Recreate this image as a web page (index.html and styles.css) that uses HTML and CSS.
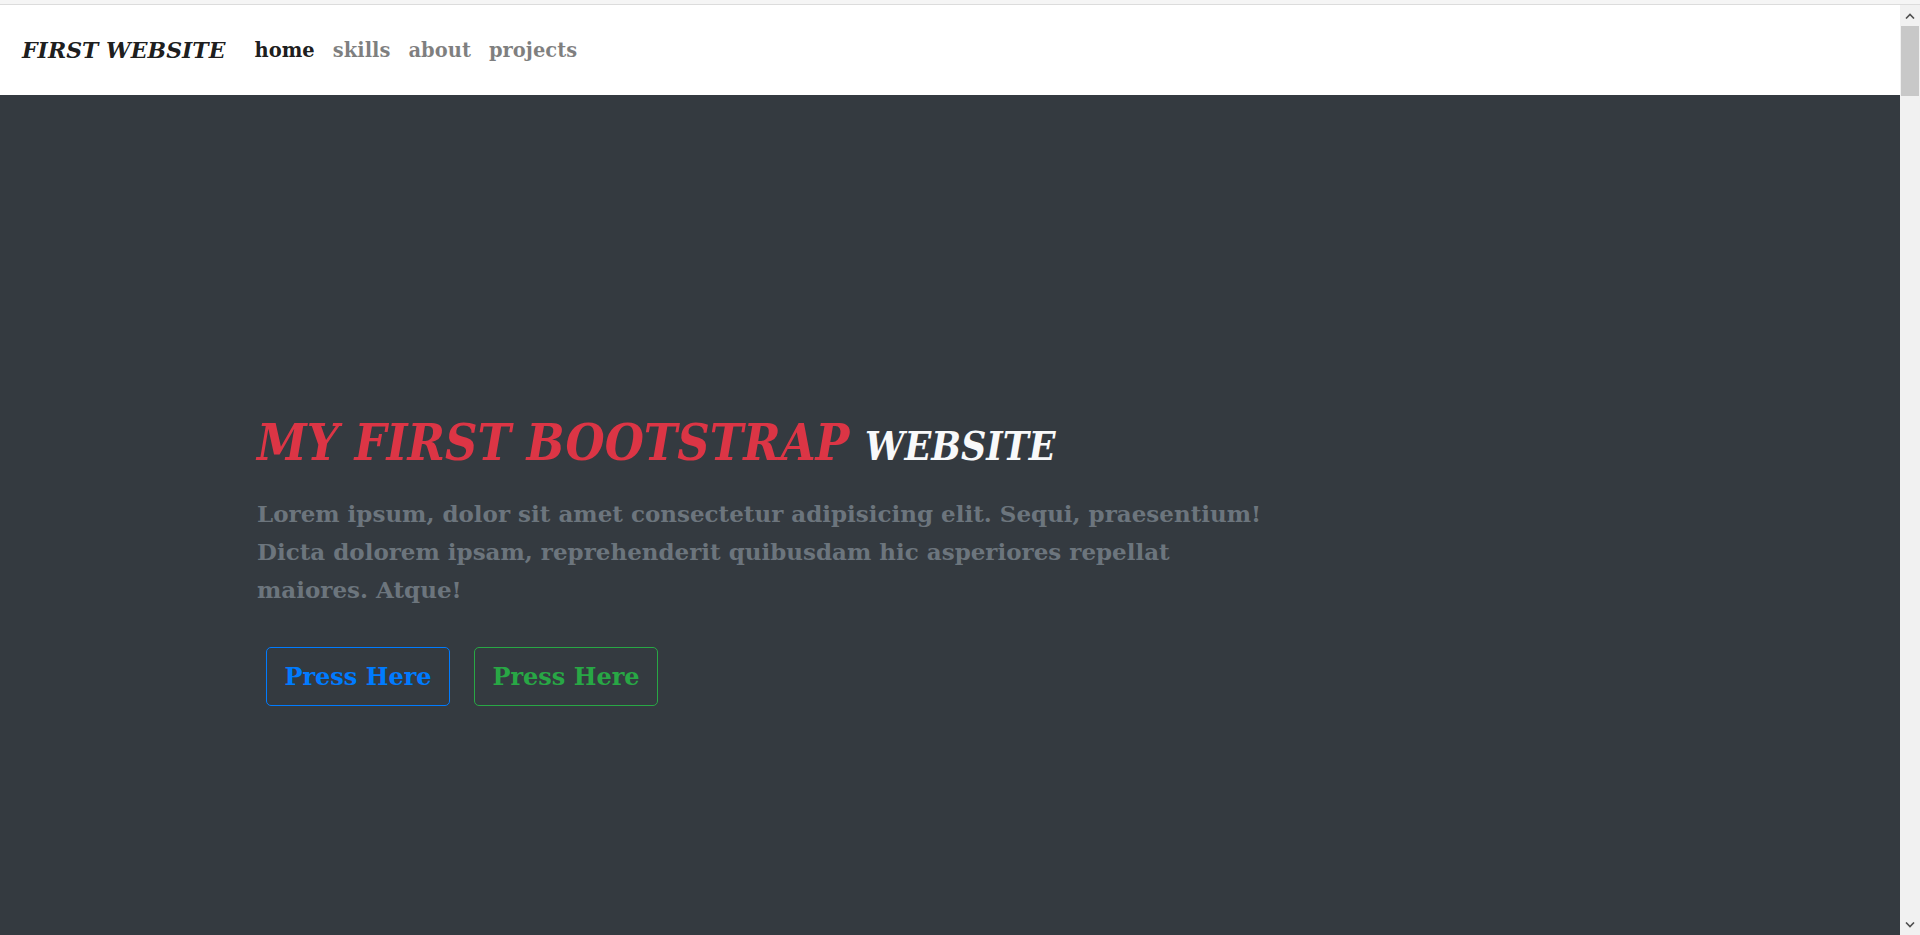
FILE: index.html
```html
<!DOCTYPE html>
<html lang="en">
<head>
<meta charset="utf-8">
<title>First Website</title>
<link rel="stylesheet" href="styles.css">
</head>
<body>
<div class="chrome-top"></div>
<div class="window">
  <div class="page">
    <nav class="navbar">
      <a class="brand" href="#">FIRST WEBSITE</a>
      <ul class="nav">
        <li><a class="nav-link active" href="#">home</a></li>
        <li><a class="nav-link" href="#">skills</a></li>
        <li><a class="nav-link" href="#">about</a></li>
        <li><a class="nav-link" href="#">projects</a></li>
      </ul>
    </nav>
    <section class="hero">
      <div class="hero-inner">
        <h1 class="title"><span class="title-red">MY FIRST BOOTSTRAP</span> <small class="title-small">WEBSITE</small></h1>
        <p class="lead">Lorem ipsum, dolor sit amet consectetur adipisicing elit. Sequi, praesentium! Dicta dolorem ipsam, reprehenderit quibusdam hic asperiores repellat maiores. Atque!</p>
        <div class="actions">
          <a class="btn btn-blue" href="#">Press Here</a>
          <a class="btn btn-green" href="#">Press Here</a>
        </div>
      </div>
    </section>
  </div>
  <div class="scrollbar">
    <div class="sb-btn"><svg width="10" height="6" viewBox="0 0 10 6"><path d="M1 5.5 L5 1.5 L9 5.5" fill="none" stroke="#505050" stroke-width="1.6"/></svg></div>
    <div class="sb-thumb"></div>
    <div class="sb-track"></div>
    <div class="sb-btn"><svg width="10" height="6" viewBox="0 0 10 6"><path d="M1 0.5 L5 4.5 L9 0.5" fill="none" stroke="#505050" stroke-width="1.6"/></svg></div>
  </div>
</div>
</body>
</html>
```
FILE: styles.css
```css
* { box-sizing: border-box; }
html, body { margin: 0; padding: 0; height: 100%; overflow: hidden; }
body {
  font-family: "DejaVu Serif", serif;
  display: flex;
  flex-direction: column;
  background: #343a40;
}
.chrome-top {
  height: 5px;
  background: #f5f5f5;
  border-bottom: 1px solid #dcdcdc;
  flex: none;
}
.window {
  flex: 1;
  display: flex;
  min-height: 0;
}
.page {
  flex: 1;
  display: flex;
  flex-direction: column;
  background: #343a40;
}
.navbar {
  height: 90px;
  background: #fff;
  display: flex;
  align-items: center;
  padding: 0 0 0 22px;
  flex: none;
}
.brand {
  font-weight: bold;
  font-style: italic;
  font-size: 22px;
  color: rgba(0,0,0,.9);
  text-decoration: none;
  margin-right: 20px;
}
.nav {
  display: flex;
  list-style: none;
  margin: 0;
  padding: 0;
}
.nav-link {
  display: block;
  font-weight: bold;
  font-size: 19.5px;
  color: rgba(0,0,0,.5);
  text-decoration: none;
  padding: 0 9px;
}
.nav-link.active { color: rgba(0,0,0,.9); }
.hero {
  flex: 1;
  padding: 318px 0 0 257px;
}
.hero-inner { width: 1012px; }
.title {
  margin: 0 0 19px;
  font-weight: bold;
  font-style: italic;
  font-stretch: condensed;
  font-size: 50px;
  line-height: 60px;
}
.title-red { color: #dc3545; }
.title-small { color: #f8f9fa; font-size: 39px; }
.lead {
  margin: 0 0 38px;
  font-weight: bold;
  font-size: 23px;
  line-height: 38px;
  color: #6c757d;
}
.actions {
  display: flex;
  gap: 24px;
  padding-left: 9px;
}
.btn {
  display: flex;
  align-items: center;
  justify-content: center;
  width: 184px;
  height: 59px;
  border: 1px solid;
  border-radius: 5px;
  font-weight: bold;
  font-size: 24px;
  text-decoration: none;
}
.btn-blue { color: #007bff; border-color: #007bff; }
.btn-green { color: #28a745; border-color: #28a745; }
.scrollbar {
  width: 20px;
  flex: none;
  background: #f1f1f1;
  display: flex;
  flex-direction: column;
}
.sb-btn {
  height: 21px;
  display: flex;
  align-items: center;
  justify-content: center;
}
.sb-thumb {
  height: 70px;
  margin: 0 1px;
  background: #c8c8c8;
}
.sb-track { flex: 1; }
```
